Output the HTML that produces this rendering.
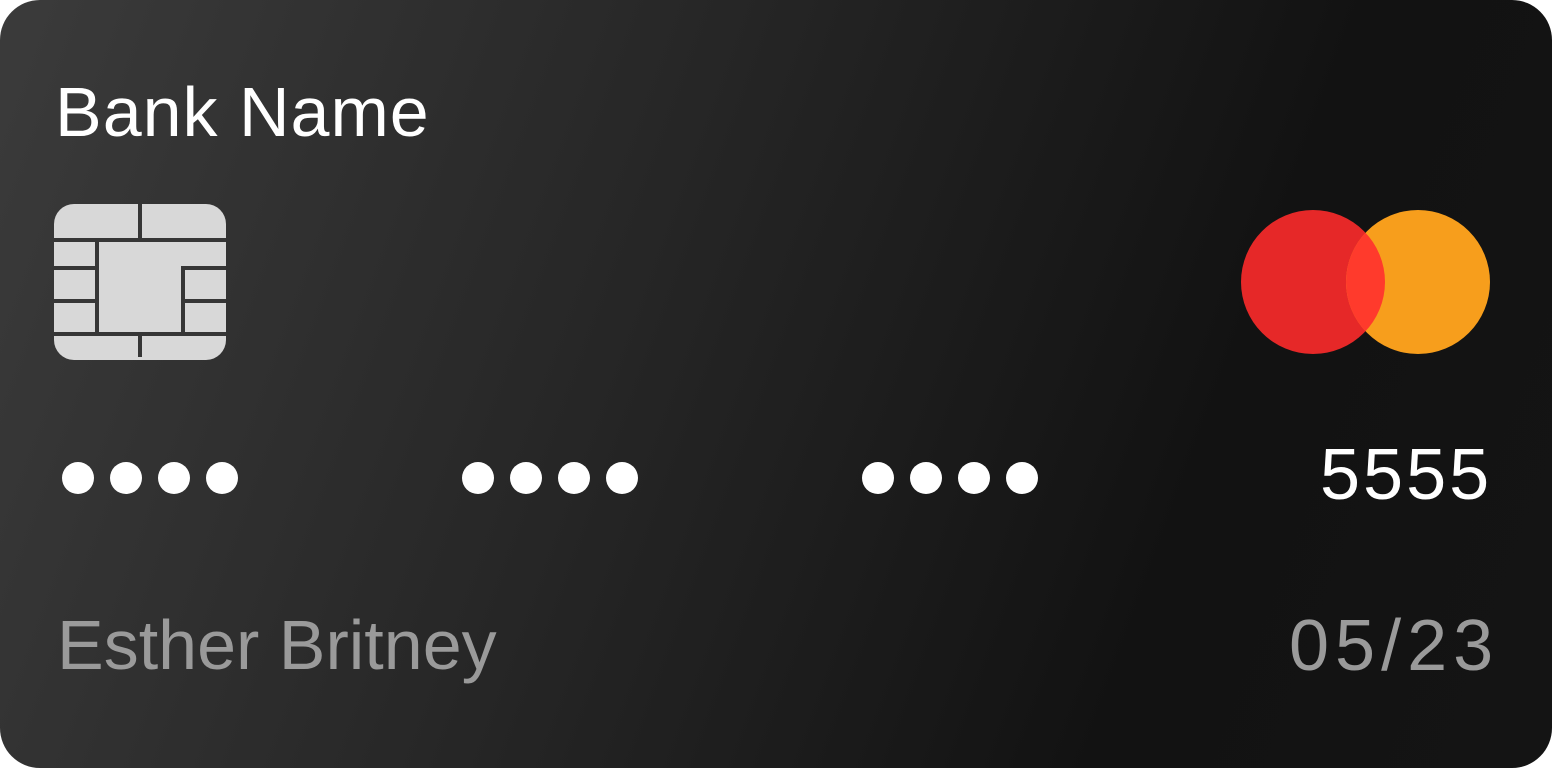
<!DOCTYPE html>
<html><head><style>
html,body{margin:0;padding:0;background:#fff;width:1552px;height:768px;overflow:hidden}
.card{position:absolute;left:0;top:0;width:1552px;height:768px;border-radius:40px;background:linear-gradient(110deg,#3b3b3b 0%,#262626 40%,#121212 75%,#141414 100%);overflow:hidden;font-family:"Liberation Sans",sans-serif}
.t{position:absolute;white-space:nowrap;line-height:1}
.dot{position:absolute;width:32px;height:32px;border-radius:50%;background:#fff;top:462px}
</style></head><body>
<div class="card">
<div class="t" style="left:55px;top:77px;font-size:70px;color:#fff;letter-spacing:1px">Bank Name</div>
<svg style="position:absolute;left:0;top:0" width="1552" height="768">
<rect x="54" y="204" width="172" height="156" rx="20" fill="#d8d8d8"/>
<g fill="#363636">
<rect x="54" y="238" width="172" height="4"/>
<rect x="138" y="204" width="4" height="34"/>
<rect x="95" y="242" width="4" height="94"/>
<rect x="54" y="266" width="41" height="4"/>
<rect x="54" y="299" width="41" height="4"/>
<rect x="54" y="332" width="172" height="4"/>
<rect x="181" y="266" width="4" height="66"/>
<rect x="181" y="266" width="45" height="4"/>
<rect x="185" y="299" width="41" height="4"/>
<rect x="138" y="336" width="4" height="21"/>
</g>
<circle cx="1313" cy="282" r="72" fill="#e62828"/>
<circle cx="1418" cy="282" r="72" fill="#f79e1c"/>
<clipPath id="c"><circle cx="1313" cy="282" r="72"/></clipPath>
<circle cx="1418" cy="282" r="72" fill="#ff3a2c" clip-path="url(#c)"/>
</svg>
<div class="dot" style="left:62px"></div><div class="dot" style="left:110px"></div><div class="dot" style="left:158px"></div><div class="dot" style="left:206px"></div>
<div class="dot" style="left:462px"></div><div class="dot" style="left:510px"></div><div class="dot" style="left:558px"></div><div class="dot" style="left:606px"></div>
<div class="dot" style="left:862px"></div><div class="dot" style="left:910px"></div><div class="dot" style="left:958px"></div><div class="dot" style="left:1006px"></div>
<div class="t" style="left:1320px;top:439px;font-size:72px;color:#fff;letter-spacing:3px">5555</div>
<div class="t" style="left:57px;top:610px;font-size:70px;color:#9a9a9a;letter-spacing:0px">Esther Britney</div>
<div class="t" style="left:1289px;top:610px;font-size:72px;color:#9a9a9a;letter-spacing:6px">05/23</div>
</div>
</body></html>
